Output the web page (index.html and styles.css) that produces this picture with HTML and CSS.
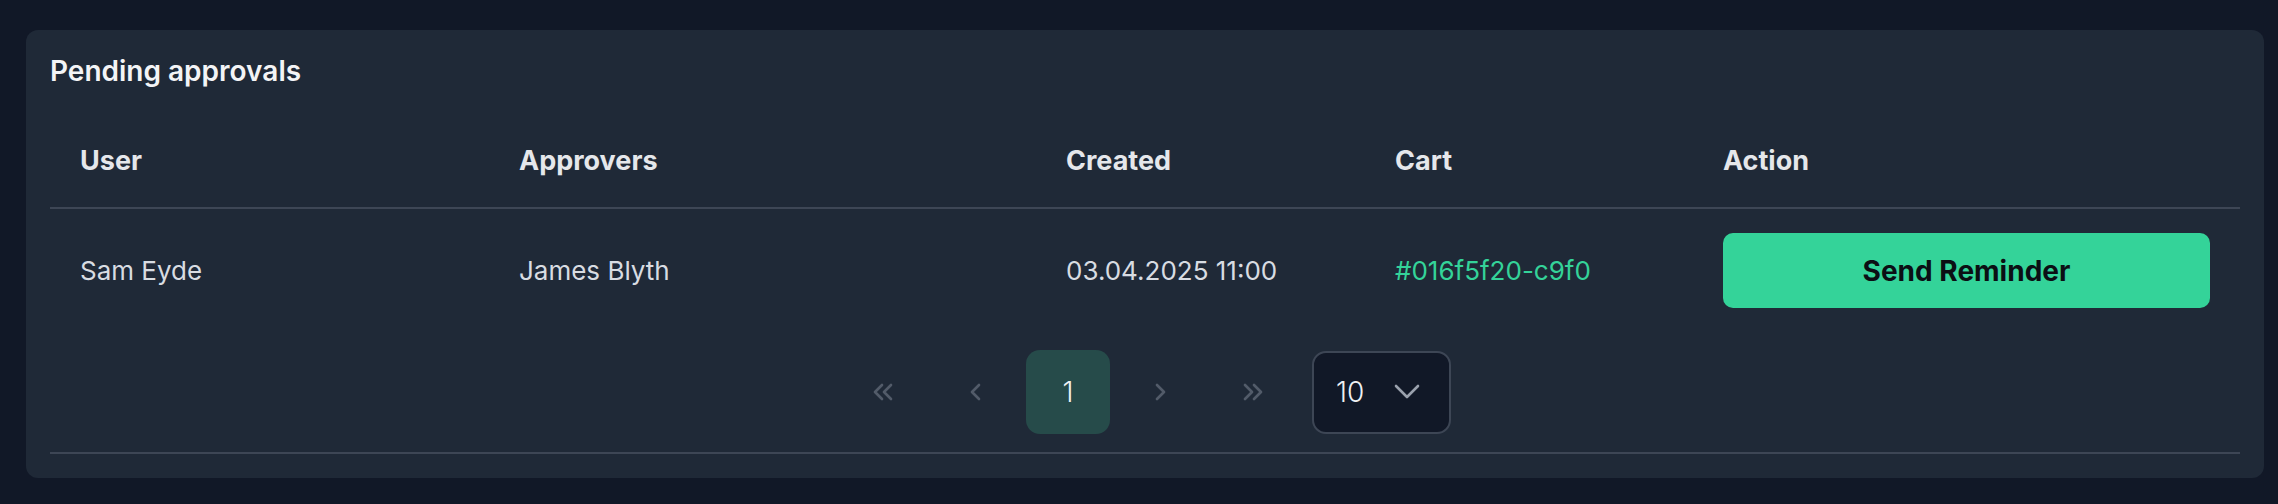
FILE: index.html
```html
<!DOCTYPE html>
<html lang="en">
<head>
<meta charset="utf-8">
<title>Pending approvals</title>
<link rel="stylesheet" href="styles.css">
</head>
<body>
<section class="card">
  <h2 class="title">Pending approvals</h2>
  <div class="table">
    <div class="row head">
      <div class="cell">User</div>
      <div class="cell">Approvers</div>
      <div class="cell">Created</div>
      <div class="cell">Cart</div>
      <div class="cell">Action</div>
    </div>
    <div class="row body">
      <div class="cell">Sam Eyde</div>
      <div class="cell">James Blyth</div>
      <div class="cell">03.04.2025 11:00</div>
      <div class="cell"><a class="cart-link" href="#">#016f5f20-c9f0</a></div>
      <div class="cell"><button class="btn-remind" type="button">Send Reminder</button></div>
    </div>
  </div>
  <nav class="pager">
    <button class="pg-btn" type="button" aria-label="First page">
      <svg width="24" height="18" viewBox="0 0 24 18" fill="none" stroke="currentColor" stroke-width="2.7" stroke-linecap="round" stroke-linejoin="round"><path d="M10 2 L3 9 L10 16"/><path d="M19 2 L12 9 L19 16"/></svg>
    </button>
    <button class="pg-btn" type="button" aria-label="Previous page">
      <svg width="14" height="18" viewBox="0 0 14 18" fill="none" stroke="currentColor" stroke-width="2.7" stroke-linecap="round" stroke-linejoin="round"><path d="M10 2 L3 9 L10 16"/></svg>
    </button>
    <button class="pg-btn active" type="button">1</button>
    <button class="pg-btn" type="button" aria-label="Next page">
      <svg width="14" height="18" viewBox="0 0 14 18" fill="none" stroke="currentColor" stroke-width="2.7" stroke-linecap="round" stroke-linejoin="round"><path d="M4 2 L11 9 L4 16"/></svg>
    </button>
    <button class="pg-btn" type="button" aria-label="Last page">
      <svg width="24" height="18" viewBox="0 0 24 18" fill="none" stroke="currentColor" stroke-width="2.7" stroke-linecap="round" stroke-linejoin="round"><path d="M5 2 L12 9 L5 16"/><path d="M14 2 L21 9 L14 16"/></svg>
    </button>
    <div class="per-page">
      <span class="per-val">10</span>
      <svg class="chev" width="26" height="16" viewBox="0 0 26 16" fill="none" stroke="currentColor" stroke-width="2.6" stroke-linecap="round" stroke-linejoin="round"><path d="M2 2 L13 13 L24 2"/></svg>
    </div>
  </nav>
</section>
</body>
</html>
```

FILE: styles.css
```css
* { box-sizing: border-box; }

html, body {
  margin: 0;
  background: #111827;
}

body {
  padding: 30px 14px 26px 26px;
  font-family: Inter, "Noto Sans", sans-serif;
  color: #e5e7eb;
}

.card {
  background: #1f2937;
  border-radius: 12px;
  padding: 23px 24px 24px;
}

.title {
  margin: 0 0 25px;
  font-size: 28px;
  line-height: 36px;
  font-weight: 600;
  color: #f3f4f6;
}

.table {
  display: flex;
  flex-direction: column;
}

.row {
  display: grid;
  grid-template-columns: 439px 547px 329px 328px 1fr;
  align-items: center;
  border-bottom: 2px solid #3d4655;
}

.row.body { border-bottom: none; padding: 24px 0; }

.head { height: 95px; }

.cell {
  padding: 0 30px;
}

.head .cell {
  font-size: 27px;
  font-weight: 700;
  color: #e5e7eb;
}

.body .cell {
  font-size: 26px;
  font-weight: 400;
  color: #d8dce2;
}

.cart-link {
  color: #34d399;
  text-decoration: none;
}

.btn-remind {
  display: block;
  width: 100%;
  height: 75px;
  border: none;
  border-radius: 10px;
  background: #34d399;
  color: #0b0f14;
  font-family: Inter, "Noto Sans", sans-serif;
  font-size: 28px;
  font-weight: 700;
}

.pager {
  display: flex;
  justify-content: center;
  align-items: center;
  gap: 8px;
  padding: 18px 0 18px 3px;
  border-bottom: 2px solid #3d4655;
}

.pg-btn {
  width: 84px;
  height: 84px;
  display: flex;
  align-items: center;
  justify-content: center;
  border: none;
  border-radius: 14px;
  background: transparent;
  color: #525b69;
  font-family: Inter, "Noto Sans", sans-serif;
  font-size: 28px;
  font-weight: 300;
  padding: 0;
}

.pg-btn.active {
  background: #264b4a;
  color: #eef0f3;
}

.per-page {
  margin-left: 10px;
  width: 139px;
  height: 83px;
  display: flex;
  align-items: center;
  padding: 0 0 0 22px;
  gap: 30px;
  border: 2px solid #3d4655;
  border-radius: 14px;
  background: #111827;
}

.per-val {
  font-size: 28px;
  font-weight: 300;
  color: #eef0f3;
}

.chev { color: #9aa1ad; }
```
